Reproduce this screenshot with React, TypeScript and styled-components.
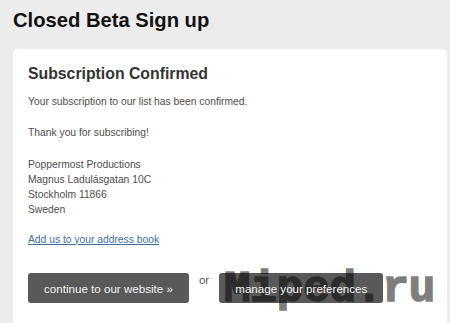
import { FC } from "react";
import styled, { createGlobalStyle } from "styled-components";

const GlobalStyle = createGlobalStyle`
    html, body {
        margin: 0;
        background: #ececec;
        font-family: "Liberation Sans", Arial, sans-serif;
    }
`;

const Page = styled.main`
    padding: 8px 3px 0 13px;
    height: 315px;
    overflow: hidden;
`;

const PageTitle = styled.h1`
    font-size: 20.2px;
    line-height: 24px;
    font-weight: bold;
    color: #111;
    margin: 0 0 17px 0;
`;

const Card = styled.section`
    background: #fff;
    border-radius: 5px;
    padding: 15px 15px 40px 15px;
`;

const CardTitle = styled.h2`
    font-size: 15.8px;
    line-height: 20px;
    font-weight: bold;
    color: #333;
    margin: 0 0 10px 0;
`;

const Paragraph = styled.p<{ $gap?: number }>`
    font-size: 10.3px;
    line-height: 15.3px;
    color: #4d4d4d;
    margin: 0 0 ${(p) => p.$gap ?? 16}px 0;
`;

const Link = styled.a`
    color: #3a6ea5;
    text-decoration: underline;
`;

const Actions = styled.div`
    position: relative;
    display: flex;
    align-items: flex-start;
    margin-top: 26px;
`;

const Button = styled.a`
    display: inline-flex;
    align-items: center;
    height: 30px;
    padding: 0 16px;
    background: #595959;
    border-radius: 3px;
    color: #f2f2f2;
    font-size: 11.6px;
    text-decoration: none;
    white-space: nowrap;
`;

const Label = styled.span`
    position: relative;
    z-index: 2;
`;

const Or = styled.span`
    font-size: 11.6px;
    line-height: 14px;
    color: #555;
    margin: 0 10px;
`;

// the site's stamp drawn over the second button
const Watermark = styled.div`
    position: absolute;
    z-index: 1;
    left: 196px;
    top: -6px;
    font-family: "Liberation Mono", "Courier New", monospace;
    font-weight: bold;
    font-size: 44px;
    line-height: 44px;
    color: #000;
    -webkit-text-stroke: 1.6px #000;
    opacity: 0.5;
    pointer-events: none;
    white-space: nowrap;
`;

const App: FC = () => {
    return (
        <>
            <GlobalStyle />
            <Page>
                <PageTitle>Closed Beta Sign up</PageTitle>
                <Card>
                    <CardTitle>Subscription Confirmed</CardTitle>
                    <Paragraph>Your subscription to our list has been confirmed.</Paragraph>
                    <Paragraph>Thank you for subscribing!</Paragraph>
                    <Paragraph $gap={14}>
                        Poppermost Productions
                        <br />
                        Magnus Ladulásgatan 10C
                        <br />
                        Stockholm 11866
                        <br />
                        Sweden
                    </Paragraph>
                    <Paragraph $gap={0}>
                        <Link href="#">Add us to your address book</Link>
                    </Paragraph>
                    <Actions>
                        <Button href="#">
                            <Label>continue to our website »</Label>
                        </Button>
                        <Or>or</Or>
                        <Button href="#">
                            <Label>manage your preferences</Label>
                        </Button>
                        <Watermark>Miped.ru</Watermark>
                    </Actions>
                </Card>
            </Page>
        </>
    );
};

export default App;
